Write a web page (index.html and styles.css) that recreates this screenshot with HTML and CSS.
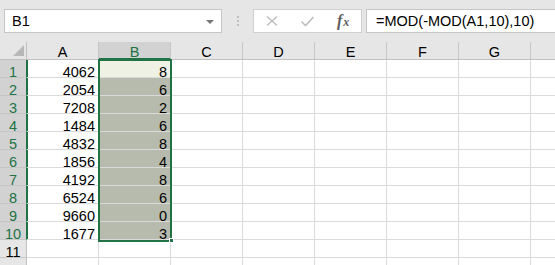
FILE: index.html
```
<!DOCTYPE html>
<html>
<head>
<meta charset="utf-8">
<title>Book1 - Excel</title>
<link rel="stylesheet" href="styles.css">
</head>
<body>
<div class="toolbar">
	<div class="namebox"><span>B1</span><i class="caret"></i></div>
	<div class="grip"><i></i><i></i><i></i></div>
	<div class="fxbtns">
		<svg class="btn" width="14" height="12" viewBox="0 0 14 12"><path d="M2 1.5L12 10.5M12 1.5L2 10.5" stroke="#bdbdbd" stroke-width="1.4" fill="none"/></svg>
		<svg class="btn" width="15" height="12" viewBox="0 0 15 12"><path d="M1.5 6.5L5.5 10.5L13.5 2" stroke="#bdbdbd" stroke-width="1.6" fill="none"/></svg>
		<span class="fx"><i>f</i><i class="x">x</i></span>
	</div>
	<div class="formula">=MOD(-MOD(A1,10),10)</div>
</div>

<div class="sheet">
	<!-- header row -->
	<div class="corner"><i class="tri"></i></div>
	<div class="colhead">A</div>
	<div class="colhead on">B</div>
	<div class="colhead">C</div>
	<div class="colhead">D</div>
	<div class="colhead">E</div>
	<div class="colhead">F</div>
	<div class="colhead">G</div>
	<div class="colhead"></div>

	<div class="rowhead on">1</div><div class="cell">4062</div><div class="cell active">8</div><div class="cell"></div><div class="cell"></div><div class="cell"></div><div class="cell"></div><div class="cell"></div><div class="cell"></div>
	<div class="rowhead on">2</div><div class="cell">2054</div><div class="cell sel">6</div><div class="cell"></div><div class="cell"></div><div class="cell"></div><div class="cell"></div><div class="cell"></div><div class="cell"></div>
	<div class="rowhead on">3</div><div class="cell">7208</div><div class="cell sel">2</div><div class="cell"></div><div class="cell"></div><div class="cell"></div><div class="cell"></div><div class="cell"></div><div class="cell"></div>
	<div class="rowhead on">4</div><div class="cell">1484</div><div class="cell sel">6</div><div class="cell"></div><div class="cell"></div><div class="cell"></div><div class="cell"></div><div class="cell"></div><div class="cell"></div>
	<div class="rowhead on">5</div><div class="cell">4832</div><div class="cell sel">8</div><div class="cell"></div><div class="cell"></div><div class="cell"></div><div class="cell"></div><div class="cell"></div><div class="cell"></div>
	<div class="rowhead on">6</div><div class="cell">1856</div><div class="cell sel">4</div><div class="cell"></div><div class="cell"></div><div class="cell"></div><div class="cell"></div><div class="cell"></div><div class="cell"></div>
	<div class="rowhead on">7</div><div class="cell">4192</div><div class="cell sel">8</div><div class="cell"></div><div class="cell"></div><div class="cell"></div><div class="cell"></div><div class="cell"></div><div class="cell"></div>
	<div class="rowhead on">8</div><div class="cell">6524</div><div class="cell sel">6</div><div class="cell"></div><div class="cell"></div><div class="cell"></div><div class="cell"></div><div class="cell"></div><div class="cell"></div>
	<div class="rowhead on">9</div><div class="cell">9660</div><div class="cell sel">0</div><div class="cell"></div><div class="cell"></div><div class="cell"></div><div class="cell"></div><div class="cell"></div><div class="cell"></div>
	<div class="rowhead on">10</div><div class="cell">1677</div><div class="cell sel">3</div><div class="cell"></div><div class="cell"></div><div class="cell"></div><div class="cell"></div><div class="cell"></div><div class="cell"></div>
	<div class="rowhead">11</div><div class="cell"></div><div class="cell"></div><div class="cell"></div><div class="cell"></div><div class="cell"></div><div class="cell"></div><div class="cell"></div><div class="cell"></div>
	<div class="rowhead">12</div><div class="cell"></div><div class="cell"></div><div class="cell"></div><div class="cell"></div><div class="cell"></div><div class="cell"></div><div class="cell"></div><div class="cell"></div>

	<!-- selection outline B1:B10 and fill handle -->
	<div class="selbox"></div>
	<div class="handle"></div>
</div>
</body>
</html>
```

FILE: styles.css
```
body {
	margin:0;
	width:555px;
	height:265px;
	overflow:hidden;
	background-color:white;
	color:black;
	font-family:"Liberation Sans", Arial, sans-serif;
	font-size:14.5px;
}

/* formula bar area */
.toolbar {
	display:flex;
	align-items:flex-start;
	height:42px;
	padding:9px 0 0 4px;
	box-sizing:border-box;
	background-color:#e6e6e6;
}
.namebox {
	display:flex;
	align-items:center;
	justify-content:space-between;
	width:218px;
	height:24px;
	padding:0 7px 0 7px;
	box-sizing:border-box;
	background-color:white;
	border:1px solid #c6c6c6;
}
.caret {
	width:0;
	height:0;
	border-left:4px solid transparent;
	border-right:4px solid transparent;
	border-top:4px solid #777;
	margin-top:1px;
}
.grip {
	display:flex;
	flex-direction:column;
	gap:2px;
	width:31px;
	height:24px;
	align-items:center;
	justify-content:center;
}
.grip i {
	width:2px;
	height:2px;
	background-color:#bdbdbd;
}
.fxbtns {
	display:flex;
	align-items:center;
	width:109px;
	height:24px;
	box-sizing:border-box;
	padding-left:11px;
	background-color:white;
	border:1px solid #d0d0d0;
}
.btn {
	margin-right:21px;
}
.btn + .btn {
	margin-right:22px;
}
.fx {
	font-family:"Liberation Serif", serif;
	font-size:16px;
	color:#5e5e5e;
	font-style:italic;
	font-weight:bold;
}
.fx .x {
	font-size:12px;
	margin-left:1px;
}
.formula {
	flex:1;
	height:24px;
	margin-left:4px;
	padding-left:9px;
	box-sizing:border-box;
	line-height:22px;
	background-color:white;
	border:1px solid #c6c6c6;
	border-right:none;
	white-space:nowrap;
}

/* sheet grid */
.sheet {
	position:relative;
	display:grid;
	grid-template-columns:27px repeat(8, 72px);
	grid-auto-rows:18px;
}
.sheet > div {
	box-sizing:border-box;
	white-space:nowrap;
}
.corner {
	display:flex;
	align-items:flex-end;
	justify-content:flex-end;
	padding:0 2px 3px 0;
	background-color:#e6e6e6;
	border-right:1px solid #c0c0c0;
	border-bottom:1px solid #c0c0c0;
}
.tri {
	width:0;
	height:0;
	border-left:11px solid transparent;
	border-bottom:11px solid #b8b8b8;
}
.colhead {
	text-align:center;
	line-height:18px;
	padding-top:1px;
	background-color:#e6e6e6;
	border-right:1px solid #c6c6c6;
	border-bottom:1px solid #c0c0c0;
}
.colhead.on {
	background-color:#d2d2d2;
	color:#217346;
	border-bottom:2px solid #217346;
}
.rowhead {
	text-align:center;
	line-height:18px;
	padding-top:3px;
	background-color:#e6e6e6;
	border-right:1px solid #c0c0c0;
	border-bottom:1px solid #c6c6c6;
}
.rowhead.on {
	background-color:#d2d2d2;
	color:#217346;
	border-right:1px solid #217346;
	box-shadow:1px 0 0 #217346;
}
.cell {
	text-align:right;
	line-height:18px;
	padding:3px 3px 0 0;
	border-right:1px solid #dadada;
	border-bottom:1px solid #dadada;
}
.cell.active {
	background-color:#eef1e3;
}
.cell.sel {
	background-color:#b7bbad;
}
.selbox {
	position:absolute;
	grid-column:3 / 4;
	grid-row:2 / 12;
	top:-1px;
	bottom:-2px;
	left:-1px;
	right:-1px;
	border:2px solid #217346;
}
.handle {
	position:absolute;
	grid-column:3 / 4;
	grid-row:11 / 12;
	right:-3px;
	bottom:-3px;
	width:5px;
	height:5px;
	background-color:#217346;
	border:1px solid white;
}
```
